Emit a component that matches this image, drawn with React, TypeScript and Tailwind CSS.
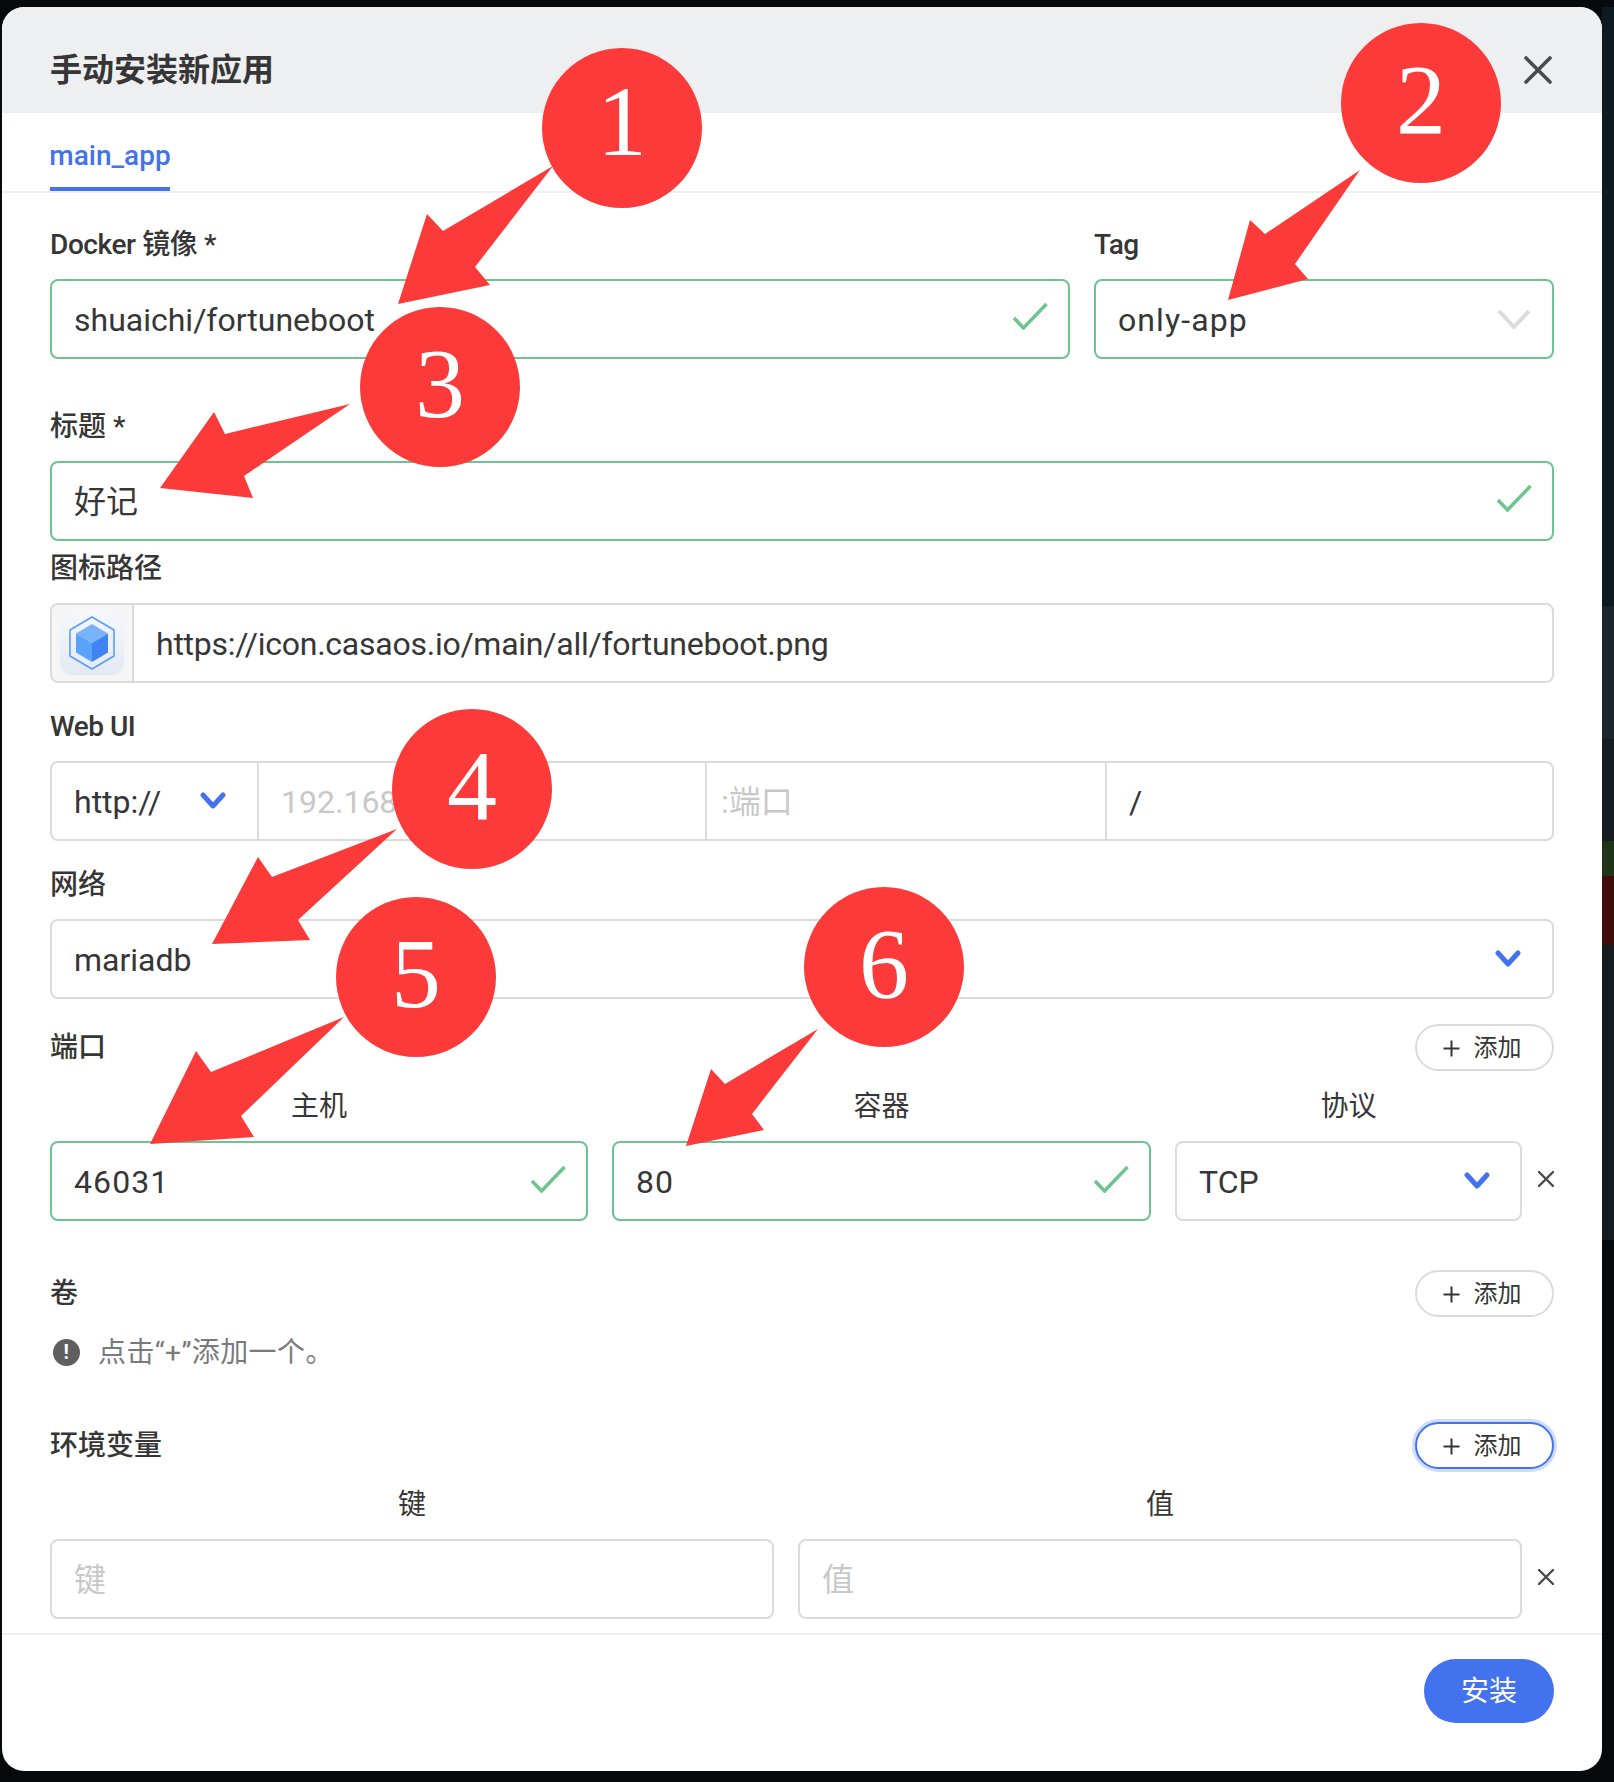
import React from "react";

const badges = [
  { n: "1", pos: "left-[542px] top-[48px] pb-[12px]" },
  { n: "2", pos: "left-[1341px] top-[23px] pb-[6px]" },
  { n: "3", pos: "left-[360px] top-[307px] pb-[6px]" },
  { n: "4", pos: "left-[392px] top-[709px] pb-[6px]" },
  { n: "5", pos: "left-[336px] top-[897px] pb-[6px]" },
  { n: "6", pos: "left-[804px] top-[887px] pb-[6px]" },
];

const arrows = [
  "553,166 443,231 427,214 398,304 490,285 475,267",
  "1360,170 1265,234 1250,220 1228,300 1308,279 1295,264",
  "350,404 225,434 214,412 160,488 253,498 244,476",
  "397,829 272,877 258,857 212,944 310,940 298,920",
  "344,1017 211,1072 196,1051 150,1144 254,1137 241,1116",
  "818,1029 725,1084 711,1069 686,1146 764,1130 752,1114",
];

function Check({ raised }: { raised?: boolean }) {
  return (
    <svg width="36" height="28" viewBox="0 0 36 28" fill="none" className={`shrink-0 ${raised ? "mb-[7px]" : "mb-[4px]"}`}>
      <path d="M2 16L11.5 26L34.5 2" stroke="#6cc48f" strokeWidth="3.5" />
    </svg>
  );
}

function Chevron({ muted }: { muted?: boolean }) {
  if (muted) {
    return (
      <svg width="34" height="20" viewBox="0 0 34 20" fill="none" className="shrink-0">
        <path d="M2 2L17 18L32 2" stroke="#dbdbdb" strokeWidth="4" />
      </svg>
    );
  }
  return (
    <svg width="26" height="18" viewBox="0 0 26 18" fill="none" className="shrink-0">
      <path d="M3 3L13 14L23 3" stroke="#4272ee" strokeWidth="5" strokeLinecap="round" strokeLinejoin="round" />
    </svg>
  );
}

function SmallX() {
  return (
    <svg width="16" height="16" viewBox="0 0 16 16" fill="none" className="mb-[4px] shrink-0">
      <path d="M1 1L15 15M15 1L1 15" stroke="#4a4a4a" strokeWidth="2.4" strokeLinecap="round" />
    </svg>
  );
}

function Label({ children, className = "" }: { children: React.ReactNode; className?: string }) {
  return (
    <div className={`flex h-[40px] items-center text-[28px] font-medium text-[#363636] ${className}`}>{children}</div>
  );
}

function ColLabel({ children }: { children: React.ReactNode }) {
  return <div className="mb-[15px] flex h-[40px] items-center justify-center pt-[2px] text-[28px] text-[#363636]">{children}</div>;
}

function Box({
  children,
  valid,
  placeholder,
  right,
  className = "",
  textClass = "",
}: {
  children: React.ReactNode;
  valid?: boolean;
  placeholder?: boolean;
  right?: React.ReactNode;
  className?: string;
  textClass?: string;
}) {
  return (
    <div
      className={`flex h-[80px] items-center justify-between rounded-[8px] border-2 bg-white pl-[22px] pr-[20px] text-[32px] ${
        valid ? "border-[#6cc48f]" : "border-[#dbdbdb]"
      } ${placeholder ? "text-[#c8c8c8]" : "text-[#363636]"} ${className}`}
    >
      <span className={`whitespace-nowrap pt-[2px] ${textClass}`}>{children}</span>
      {right}
    </div>
  );
}

function AddButton({ focused }: { focused?: boolean }) {
  return (
    <button
      className={`flex h-[47px] w-[139px] items-center justify-center gap-[14px] rounded-full border-2 bg-white pr-[5px] pt-[1px] text-[24px] text-[#363636] ${
        focused ? "border-[#4272ee] shadow-[0_0_0_3px_rgba(66,114,238,0.25)]" : "border-[#dbdbdb]"
      }`}
    >
      <svg width="17" height="17" viewBox="0 0 17 17" fill="none">
        <path d="M8.5 0.5V16.5M0.5 8.5H16.5" stroke="#363636" strokeWidth="2" />
      </svg>
      添加
    </button>
  );
}

function AppIcon() {
  return (
    <div className="flex h-[64px] w-[64px] items-center justify-center rounded-[12px] bg-gradient-to-b from-[#f5f7fc] to-[#e3e9f3]">
      <svg width="64" height="64" viewBox="0 0 64 64" fill="none">
        <path d="M32 6L54 19V45L32 58L10 45V19Z" stroke="#5b9df7" strokeWidth="1.6" strokeLinejoin="round" />
        <path d="M32 13L48 22.5L32 32L16 22.5Z" fill="#79b4fb" />
        <path d="M16 22.5L32 32V51L16 41.5Z" fill="#5aa3fb" />
        <path d="M48 22.5L32 32V51L48 41.5Z" fill="#3f83f5" />
      </svg>
    </div>
  );
}

export default function App() {
  return (
    <div className="relative h-[1782px] w-[1614px] overflow-hidden bg-[#070a0d] font-[Roboto,'Noto_Sans_CJK_SC',sans-serif]">
      {/* the page behind the dialog, only a sliver shows on the right */}
      <div className="absolute right-0 top-[7px] flex w-[12px] flex-col">
        <div className="h-[599px] bg-[#0d1a22]" />
        <div className="h-[133px] bg-[#1c262c]" />
        <div className="h-[102px] bg-[#151d22]" />
        <div className="h-[35px] bg-[#1f3518]" />
        <div className="h-[69px] bg-[#3e0c0b]" />
        <div className="h-[295px] bg-[#141c21]" />
      </div>

      <div className="relative ml-[2px] mt-[7px] flex h-[1764px] w-[1600px] flex-col overflow-hidden rounded-[22px] bg-white">
        <header className="flex h-[106px] shrink-0 items-center justify-between bg-[#eeeff1] pl-[48px] pr-[50px] pt-[19px]">
          <h1 className="text-[32px] font-semibold text-[#363636]">手动安装新应用</h1>
          <svg width="28" height="28" viewBox="0 0 28 28" fill="none">
            <path d="M2 2L26 26M26 2L2 26" stroke="#4a4a4a" strokeWidth="3.6" strokeLinecap="round" />
          </svg>
        </header>

        <div className="h-[80px] shrink-0 border-b-2 border-[#f0f0f0] px-[48px]">
          <div className="flex h-[78px] w-[120px] items-center justify-center border-b-4 border-[#4272ee] pt-[12px] text-[28px] font-medium text-[#4272ee]">
            main_app
          </div>
        </div>

        <main className="flex flex-1 flex-col px-[48px] pt-[30px]">
          <div className="flex gap-[24px]">
            <div className="flex-1">
              <Label className="mb-[16px] pt-[3px] tracking-[-0.4px]">Docker 镜像 *</Label>
              <Box valid right={<Check raised />}>shuaichi/fortuneboot</Box>
            </div>
            <div className="w-[460px]">
              <Label className="mb-[16px] pt-[3px] tracking-[-0.6px]">Tag</Label>
              <Box valid right={<Chevron muted />} className="pr-[21px]" textClass="tracking-[1.1px]">only-app</Box>
            </div>
          </div>

          <Label className="mb-[16px] mt-[46px] pt-[4px]">标题 *</Label>
          <Box valid right={<Check raised />}>好记</Box>

          <Label className="mb-[16px] mt-[6px] pt-[4px]">图标路径</Label>
          <div className="flex h-[80px] overflow-hidden rounded-[8px] border-2 border-[#dbdbdb] text-[32px] text-[#363636]">
            <div className="flex w-[82px] shrink-0 items-center border-r-2 border-[#dbdbdb] bg-[#f5f5f5] pl-[8px]">
              <AppIcon />
            </div>
            <div className="flex flex-1 items-center pl-[22px] pt-[2px] tracking-[-0.25px]">https://icon.casaos.io/main/all/fortuneboot.png</div>
          </div>

          <Label className="mb-[16px] mt-[22px] pt-[3px] tracking-[-0.5px]">Web UI</Label>
          <div className="flex h-[80px] overflow-hidden rounded-[8px] border-2 border-[#dbdbdb] text-[32px]">
            <div className="flex w-[207px] shrink-0 items-center justify-between border-r-2 border-[#dbdbdb] pl-[22px] pr-[31px] text-[#363636]">
              <span className="pt-[2px]">http://</span>
              <Chevron />
            </div>
            <div className="flex w-[448px] shrink-0 items-center border-r-2 border-[#dbdbdb] pl-[22px] pt-[2px] text-[#c8c8c8]">192.168</div>
            <div className="flex w-[400px] shrink-0 items-center border-r-2 border-[#dbdbdb] pl-[14px] pt-[2px] text-[#c8c8c8]">:端口</div>
            <div className="flex flex-1 items-center pl-[22px] pt-[2px] text-[#363636]">/</div>
          </div>

          <Label className="mb-[16px] mt-[22px] pt-[4px]">网络</Label>
          <Box right={<Chevron />} className="pr-[31px]">mariadb</Box>

          <div className="mt-[25px] flex items-center justify-between">
            <Label>端口</Label>
            <AddButton />
          </div>
          <div className="mt-[15px] flex">
            <div className="flex flex-1 gap-[24px]">
              <div className="w-[538px]">
                <ColLabel>主机</ColLabel>
                <Box valid right={<Check />} textClass="tracking-[1.1px]">46031</Box>
              </div>
              <div className="w-[539px]">
                <ColLabel>容器</ColLabel>
                <Box valid right={<Check />} textClass="tracking-[1.1px]">80</Box>
              </div>
              <div className="w-[347px]">
                <ColLabel>协议</ColLabel>
                <Box right={<Chevron />} className="pr-[30px]">TCP</Box>
              </div>
            </div>
            <div className="mt-[55px] flex h-[80px] w-[32px] items-center justify-end">
              <SmallX />
            </div>
          </div>

          <div className="mt-[49px] flex items-center justify-between">
            <Label>卷</Label>
            <AddButton />
          </div>
          <div className="mt-[15px] flex h-[40px] items-center gap-[18px] pl-[3px] text-[28px] tracking-[0.4px] text-[#7a7a7a]">
            <div className="flex h-[27px] w-[27px] items-center justify-center rounded-full bg-[#5f5f5f] text-[20px] font-bold text-white">!</div>
            <span className="pt-[2px]">点击“+”添加一个。</span>
          </div>

          <div className="mt-[50px] flex items-center justify-between">
            <Label>环境变量</Label>
            <AddButton focused />
          </div>
          <div className="mt-[15px] flex">
            <div className="flex flex-1 gap-[24px]">
              <div className="flex-1">
                <ColLabel>键</ColLabel>
                <Box placeholder>键</Box>
              </div>
              <div className="flex-1">
                <ColLabel>值</ColLabel>
                <Box placeholder>值</Box>
              </div>
            </div>
            <div className="mt-[55px] flex h-[80px] w-[32px] items-center justify-end">
              <SmallX />
            </div>
          </div>
        </main>

        <footer className="flex h-[138px] shrink-0 items-start justify-end border-t-2 border-[#f0f0f0] px-[48px] pt-[24px]">
          <button className="flex h-[64px] w-[130px] items-center justify-center rounded-full bg-[#4272ee] pt-[2px] text-[28px] text-white">安装</button>
        </footer>
      </div>

      {/* annotations drawn over the screenshot */}
      <svg width="1614" height="1782" viewBox="0 0 1614 1782" className="pointer-events-none absolute left-0 top-0">
        {arrows.map((pts) => (
          <polygon key={pts} points={pts} fill="#fc3a3a" />
        ))}
      </svg>
      {badges.map((b) => (
        <div
          key={b.n}
          className={`absolute flex h-[160px] w-[160px] items-center justify-center rounded-full bg-[#fc3a3a] font-['Liberation_Serif',serif] text-[100px] leading-none text-white ${b.pos}`}
        >
          {b.n}
        </div>
      ))}
    </div>
  );
}
